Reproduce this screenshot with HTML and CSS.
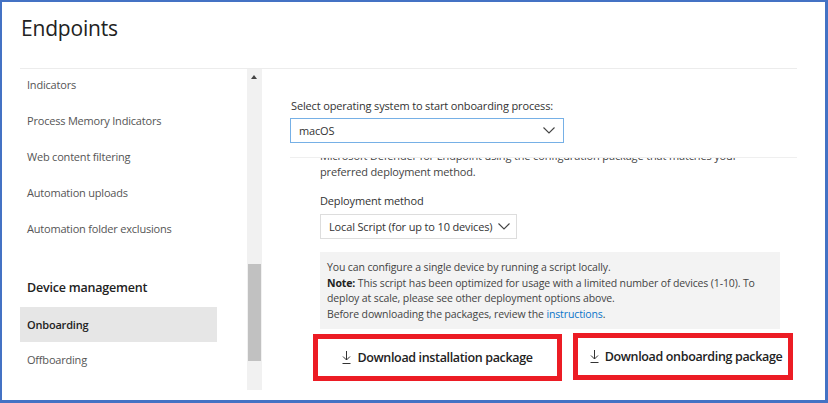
FILE: index.html
```html
<!DOCTYPE html>
<html lang="en">
<head>
    <meta charset="UTF-8">
    <title>Endpoints - Onboarding</title>
    <link rel="stylesheet" href="styles.css">
</head>
<body>

<div class="frame">
    <div class="wrap">
        <div class="header">
            <h1>Endpoints</h1>
        </div>

        <div class="page">
            <nav class="side">
                <ul class="side-list">
                    <li>Indicators</li>
                    <li>Process Memory Indicators</li>
                    <li>Web content filtering</li>
                    <li>Automation uploads</li>
                    <li>Automation folder exclusions</li>
                </ul>
                <div class="side-group">Device management</div>
                <ul class="side-list">
                    <li class="active">Onboarding</li>
                    <li>Offboarding</li>
                </ul>
            </nav>

            <div class="scrollbar">
                <span class="arrow"></span>
                <span class="thumb"></span>
            </div>

            <main class="content">
                <div class="os-pick">
                    <div class="label">Select operating system to start onboarding process:</div>
                    <div class="select os-select">
                        <span>macOS</span>
                        <svg width="12" height="7" viewBox="0 0 12 7"><path d="M0.5 0.5 L6 6 L11.5 0.5" fill="none" stroke="#444" stroke-width="1.1"/></svg>
                    </div>
                </div>

                <div class="scroll">
                    <div class="scroll-inner">
                        <p class="intro">Microsoft Defender for Endpoint using the configuration package that matches your<br>preferred deployment method.</p>

                        <div class="label">Deployment method</div>
                        <div class="select method-select">
                            <span>Local Script (for up to 10 devices)</span>
                            <svg width="12" height="7" viewBox="0 0 12 7"><path d="M0.5 0.5 L6 6 L11.5 0.5" fill="none" stroke="#444" stroke-width="1.1"/></svg>
                        </div>

                        <div class="info">
                            You can configure a single device by running a script locally.<br>
                            <b>Note:</b> This script has been optimized for usage with a limited number of devices (1-10). To<br>
                            deploy at scale, please see other deployment options above.<br>
                            Before downloading the packages, review the <a href="#">instructions</a>.
                        </div>

                        <div class="downloads">
                            <button class="dl dl-install">
                                <svg width="9" height="13" viewBox="0 0 9 13"><path d="M4.5 0 V9 M1 5.5 L4.5 9 L8 5.5 M0.5 12.5 H8.5" fill="none" stroke="#333" stroke-width="1"/></svg>
                                Download installation package
                            </button>
                            <button class="dl dl-onboard">
                                <svg width="9" height="13" viewBox="0 0 9 13"><path d="M4.5 0 V9 M1 5.5 L4.5 9 L8 5.5 M0.5 12.5 H8.5" fill="none" stroke="#333" stroke-width="1"/></svg>
                                Download onboarding package
                            </button>
                        </div>
                    </div>
                </div>
            </main>
        </div>
    </div>
</div>

</body>
</html>
```

FILE: styles.css
```css
body {
    margin: 0;
    font-family: "Open Sans", "Noto Sans", sans-serif;
    color: #333;
    background-color: #fff;
}
.frame {
    width: 828px;
    height: 403px;
    box-sizing: border-box;
    border-style: solid;
    border-color: #4472c4;
    border-width: 2px 3px 3px 2px;
    overflow: hidden;
}
.wrap {
    margin: 0 28px 0 18px;
}
.header {
    height: 66px;
    border-bottom: 1px solid #ececec;
}
.header h1 {
    margin: 0;
    padding: 11px 0 0 1px;
    font-size: 21px;
    line-height: 30px;
    font-weight: 400;
    color: #222;
    letter-spacing: -0.2px;
}
.page {
    display: flex;
    height: 331px;
}
.side {
    width: 197px;
    padding-right: 30px;
    flex-shrink: 0;
}
.side-list {
    list-style: none;
    margin: 0;
    padding: 0;
}
.side-list:first-child {
    margin-top: -2px;
    margin-bottom: 23px;
}
.side-list li,
.side-group {
    height: 36px;
    line-height: 36px;
    padding-left: 7px;
    font-size: 11px;
    letter-spacing: -0.2px;
    color: #555;
    white-space: nowrap;
}
.side-group {
    font-size: 12.5px;
    font-weight: 600;
    color: #222;
}
.side-list li.active {
    background-color: #e6e6e6;
    color: #222;
    font-weight: 600;
    margin-top: 1px;
    height: 35px;
    line-height: 35px;
}
.scrollbar {
    position: relative;
    width: 15px;
    height: 321px;
    flex-shrink: 0;
    background-color: #f1f1f1;
}
.scrollbar .arrow {
    position: absolute;
    left: 4px;
    top: 6px;
    border-left: 3.5px solid transparent;
    border-right: 3.5px solid transparent;
    border-bottom: 4px solid #444;
}
.scrollbar .thumb {
    position: absolute;
    left: 1px;
    top: 195px;
    width: 13px;
    height: 97px;
    background-color: #c1c1c1;
}
.content {
    flex: 1;
    display: flex;
    flex-direction: column;
    min-width: 0;
}
.os-pick {
    margin-left: 28px;
    padding: 29px 0 14px 1px;
    border-bottom: 1px solid #efefef;
}
.label {
    font-size: 11px;
    line-height: 16px;
    letter-spacing: -0.15px;
    color: #333;
}
.select {
    display: flex;
    align-items: center;
    justify-content: space-between;
    box-sizing: border-box;
    height: 25px;
    font-size: 11px;
    letter-spacing: -0.15px;
    color: #333;
}
.os-select {
    margin-top: 4px;
    margin-left: -1px;
    width: 274px;
    padding: 0 8px 0 8px;
    border: 1px solid #76b0e6;
}
.scroll {
    flex: 1;
    overflow: hidden;
}
.scroll-inner {
    margin-top: -10px;
    padding-left: 58px;
}
.intro {
    margin: 0;
    font-size: 11px;
    line-height: 16px;
    letter-spacing: -0.15px;
    color: #444;
    white-space: nowrap;
}
.scroll-inner .label {
    margin-top: 13px;
}
.method-select {
    margin-top: 5px;
    width: 197px;
    padding: 0 6px 0 8px;
    border: 1px solid #ddd;
}
.info {
    margin-top: 13px;
    width: 460px;
    box-sizing: border-box;
    padding: 8px 8px 7px 7px;
    background-color: #f3f3f3;
    font-size: 10.5px;
    line-height: 15.5px;
    letter-spacing: -0.12px;
    color: #444;
    white-space: nowrap;
}
.info b {
    font-weight: 700;
    color: #222;
}
.info a {
    color: #0a74c9;
    text-decoration: none;
}
.downloads {
    display: flex;
    gap: 11px;
    margin-top: 5px;
    margin-left: -7px;
}
.dl {
    display: flex;
    align-items: center;
    justify-content: center;
    gap: 6px;
    height: 47px;
    box-sizing: border-box;
    border: 5px solid #ec1c24;
    background-color: #fff;
    font-family: inherit;
    font-size: 12.5px;
    font-weight: 600;
    letter-spacing: -0.35px;
    color: #222;
    padding: 0;
    white-space: nowrap;
}
.dl-install {
    width: 249px;
}
.dl-onboard {
    width: 220px;
    margin-top: -1px;
    padding-left: 6px;
}
```
